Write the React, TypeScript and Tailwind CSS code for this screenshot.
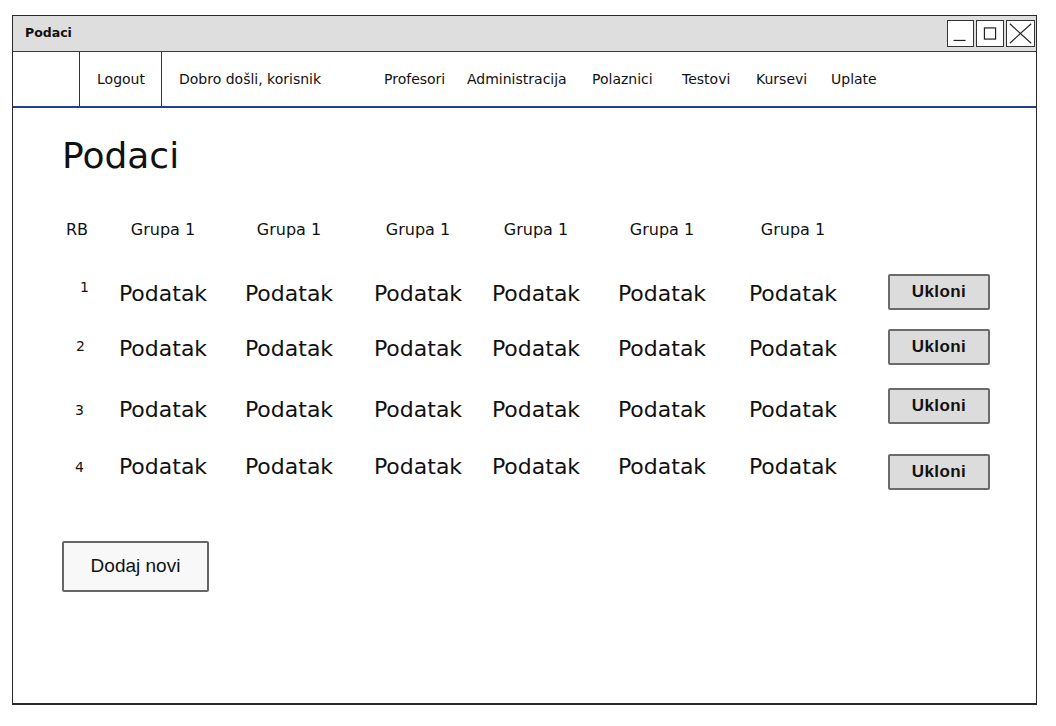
import React from "react";

const navItems = [
  { label: "Dobro došli, korisnik", w: "w-[205px]" },
  { label: "Profesori", w: "w-[83px]" },
  { label: "Administracija", w: "w-[125px]" },
  { label: "Polaznici", w: "w-[90px]" },
  { label: "Testovi", w: "w-[74px]" },
  { label: "Kursevi", w: "w-[75px]" },
  { label: "Uplate", w: "w-[80px]" },
];

const rows = [
  { n: 1, rowClass: "mt-[36px]", numClass: "pl-[18px] mb-[10px]", btnClass: "" },
  { n: 2, rowClass: "mt-[19px]", numClass: "pl-[14px] mb-[2px]", btnClass: "" },
  { n: 3, rowClass: "mt-[23px]", numClass: "pl-[13px] mt-[5px]", btnClass: "mb-[3px]" },
  { n: 4, rowClass: "mt-[16px]", numClass: "pl-[13px] mt-[4px]", btnClass: "mt-[14px]" },
];

const grid =
  "grid grid-cols-[38px_126px_126px_132px_104px_148px_114px_38px_102px]";

function TitleButtons() {
  return (
    <div className="flex gap-[2px] mr-[1px]">
      <div className="w-[27px] h-[27px] bg-white border border-[#333] flex items-center justify-center">
        <svg width="27" height="27" viewBox="0 0 27 27">
          <line x1="6" y1="21" x2="19" y2="21" stroke="#222" strokeWidth="1.3" />
        </svg>
      </div>
      <div className="w-[28px] h-[27px] bg-white border border-[#333] flex items-center justify-center">
        <svg width="28" height="27" viewBox="0 0 28 27">
          <rect x="8" y="7.5" width="12" height="12" fill="none" stroke="#222" strokeWidth="1.3" />
        </svg>
      </div>
      <div className="w-[29px] h-[27px] bg-white border border-[#333] flex items-center justify-center">
        <svg width="29" height="27" viewBox="0 0 29 27">
          <line x1="3" y1="3" x2="26" y2="24" stroke="#222" strokeWidth="1.2" />
          <line x1="26" y1="3" x2="3" y2="24" stroke="#222" strokeWidth="1.2" />
        </svg>
      </div>
    </div>
  );
}

export default function App() {
  return (
    <div className="w-[1056px] h-[726px] bg-white pt-[15px] pl-[12px] font-['DejaVu_Sans',sans-serif] text-[#111]">
      <div className="w-[1025px] h-[690px] border border-[#2a2a2a] border-b-2 flex flex-col">
        {/* Title bar */}
        <div className="h-[36px] bg-[#dedede] border-b border-[#3a3a3a] flex items-center justify-between pl-[12px]">
          <span className="text-[12.5px] font-bold">Podaci</span>
          <TitleButtons />
        </div>

        {/* Nav */}
        <div className="h-[56px] border-b-2 border-[#233f8c] flex items-stretch text-[14px]">
          <div className="w-[67px] border-r border-[#333]" />
          <div className="w-[82px] border-r border-[#333] flex items-center justify-center pl-[1px]">
            Logout
          </div>
          <div className="flex items-center pl-[17px]">
            {navItems.map((item) => (
              <span key={item.label} className={`${item.w} whitespace-nowrap`}>
                {item.label}
              </span>
            ))}
          </div>
        </div>

        {/* Content */}
        <div className="pl-[49px] pt-[30px] flex flex-col items-start">
          <h1 className="text-[36px] leading-none">Podaci</h1>

          <div className={`${grid} mt-[44px] h-[20px] items-center text-[16px]`}>
            <span className="pl-[4px]">RB</span>
            {Array.from({ length: 6 }).map((_, i) => (
              <span key={i} className="text-center">
                Grupa 1
              </span>
            ))}
          </div>

          {rows.map((r) => (
            <div key={r.n} className={`${grid} ${r.rowClass} h-[36px] items-center`}>
              <span className={`${r.numClass} text-[14px] leading-none`}>{r.n}</span>
              {Array.from({ length: 6 }).map((_, i) => (
                <span key={i} className="text-center text-[22px] leading-none pt-[4px]">
                  Podatak
                </span>
              ))}
              <span />
              <button
                className={`${r.btnClass} w-[102px] h-[36px] bg-[#dcdcdc] border-2 border-[#6b6b6b] rounded-[2px] font-['Liberation_Sans',Arial,sans-serif] font-bold text-[17px] tracking-[0.4px] text-[#111]`}
              >
                Ukloni
              </button>
            </div>
          ))}

          <button className="mt-[65px] w-[147px] h-[51px] bg-[#f8f8f8] border-2 border-[#666] rounded-[2px] font-['Liberation_Sans',Arial,sans-serif] text-[19px] text-[#111]">
            Dodaj novi
          </button>
        </div>
      </div>
    </div>
  );
}
